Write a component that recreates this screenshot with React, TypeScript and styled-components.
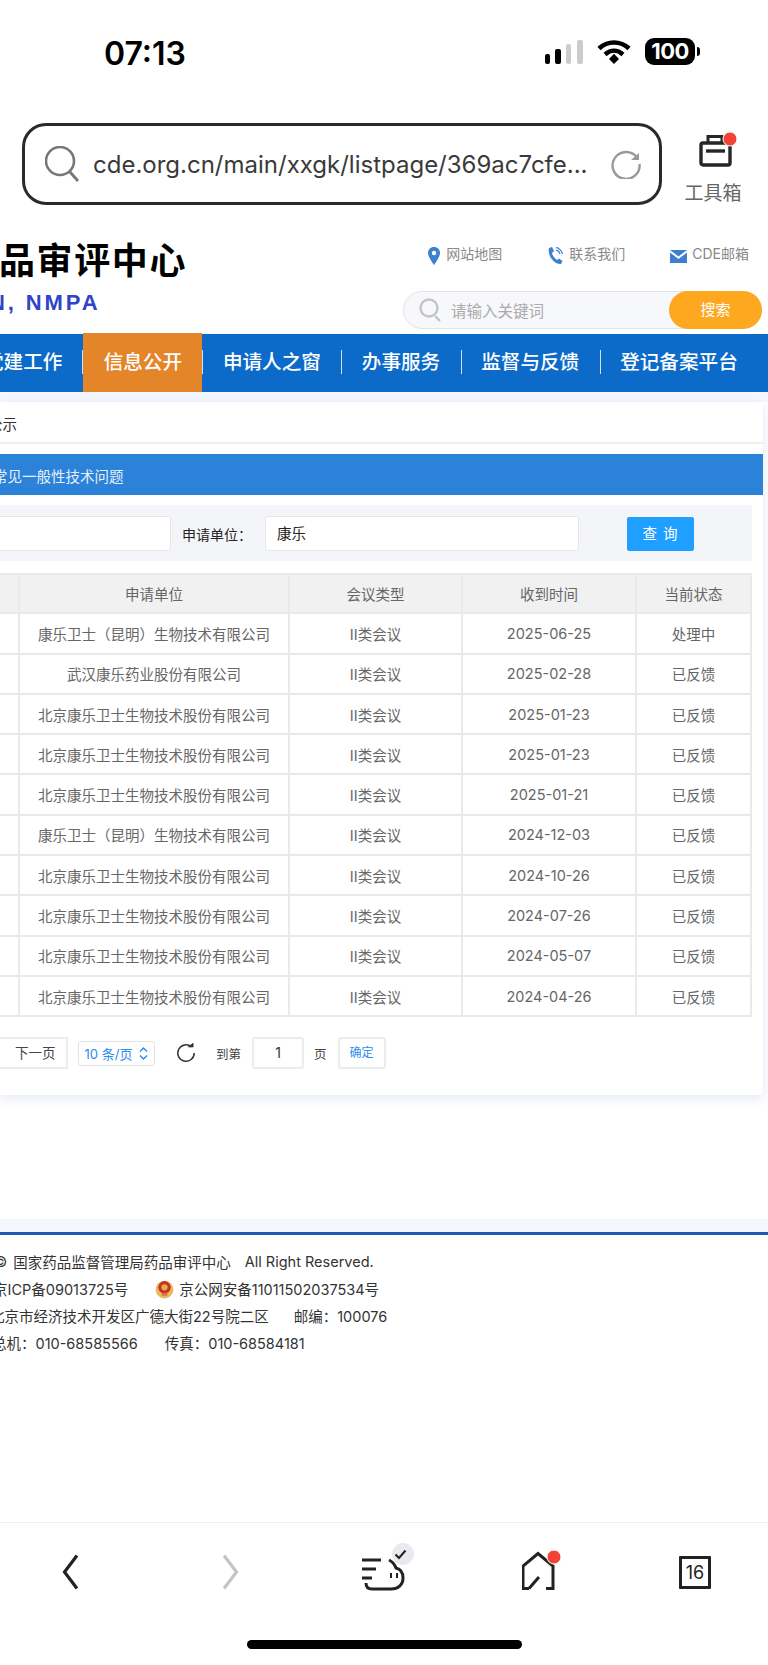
import styled, { createGlobalStyle } from "styled-components";

const GlobalStyle = createGlobalStyle`
  html, body {
    margin: 0;
    padding: 0;
    background: #fff;
  }
  body {
    font-family: "Inter", "Noto Sans CJK SC", sans-serif;
    color: #222;
  }
`;

const rows = [
  ["康乐卫士（昆明）生物技术有限公司", "2025-06-25", "处理中"],
  ["武汉康乐药业股份有限公司", "2025-02-28", "已反馈"],
  ["北京康乐卫士生物技术股份有限公司", "2025-01-23", "已反馈"],
  ["北京康乐卫士生物技术股份有限公司", "2025-01-23", "已反馈"],
  ["北京康乐卫士生物技术股份有限公司", "2025-01-21", "已反馈"],
  ["康乐卫士（昆明）生物技术有限公司", "2024-12-03", "已反馈"],
  ["北京康乐卫士生物技术股份有限公司", "2024-10-26", "已反馈"],
  ["北京康乐卫士生物技术股份有限公司", "2024-07-26", "已反馈"],
  ["北京康乐卫士生物技术股份有限公司", "2024-05-07", "已反馈"],
  ["北京康乐卫士生物技术股份有限公司", "2024-04-26", "已反馈"],
];

const navItems = ["申请人之窗", "办事服务", "监督与反馈", "登记备案平台"];

const App = () => {
  return (
    <Page>
      <GlobalStyle />
      <StatusBar>
        <Clock>07:13</Clock>
        <StatusIcons>
          <svg width="38" height="24" viewBox="0 0 38 24">
            <rect x="0" y="14" width="5" height="10" rx="2" fill="#000" />
            <rect x="10" y="9" width="6" height="15" rx="2" fill="#000" />
            <rect x="21" y="4" width="5" height="20" rx="2" fill="#ccc" />
            <rect x="32" y="0" width="6" height="24" rx="2" fill="#ccc" />
          </svg>
          <svg width="34" height="24" viewBox="0 0 34 24">
            <path d="M2 8.5C10.5 0.5 23.5 0.5 32 8.5" fill="none" stroke="#000" strokeWidth="4.6" />
            <path d="M8 14.5C13.5 9.5 20.5 9.5 26 14.5" fill="none" stroke="#000" strokeWidth="4.4" />
            <path d="M12 19L17 13.8L22 19L17 24Z" fill="#000" />
          </svg>
          <Battery>
            <BatteryBody>100</BatteryBody>
            <BatteryNub />
          </Battery>
        </StatusIcons>
      </StatusBar>

      <UrlRow>
        <UrlBar>
          <svg width="34" height="36" viewBox="0 0 34 36">
            <ellipse cx="15" cy="15" rx="14" ry="14" fill="none" stroke="#777" strokeWidth="2.6" />
            <path d="M25 26L33 35" stroke="#777" strokeWidth="2.8" />
          </svg>
          <UrlText>cde.org.cn/main/xxgk/listpage/369ac7cfe...</UrlText>
          <svg width="30" height="30" viewBox="0 0 30 30">
            <path d="M26 8.5A13.5 13.5 0 1 0 28.5 15" fill="none" stroke="#999" strokeWidth="2.4" />
            <path d="M20 11L28 11L28 4" fill="#999" stroke="none" />
          </svg>
        </UrlBar>
        <ToolBox>
          <ToolIcon>
            <svg width="40" height="40" viewBox="0 0 40 40">
              <path d="M10 11V4.5H24V11" fill="none" stroke="#262626" strokeWidth="3" />
              <rect x="3" y="11" width="29" height="22" rx="2" fill="none" stroke="#262626" strokeWidth="3.4" />
              <path d="M8 19H27" stroke="#262626" strokeWidth="3.4" />
              <circle cx="32" cy="7" r="7" fill="#f44336" stroke="#fff" strokeWidth="1" />
            </svg>
          </ToolIcon>
          <ToolLabel>工具箱</ToolLabel>
        </ToolBox>
      </UrlRow>

      <SiteHeader>
        <Brand>
          <BrandTitle>品审评中心</BrandTitle>
          <BrandSub>N, NMPA</BrandSub>
        </Brand>
        <HeaderTools>
          <TopLinks>
            <TopLink>
              <svg width="12" height="18" viewBox="0 0 12 18">
                <path d="M6 0C2.5 0 0 2.6 0 6C0 10 6 18 6 18C6 18 12 10 12 6C12 2.6 9.5 0 6 0Z" fill="#3f7fd0" />
                <circle cx="6" cy="6" r="2.2" fill="#fff" />
              </svg>
              <TopLinkText>网站地图</TopLinkText>
            </TopLink>
            <TopLink>
              <svg width="16" height="18" viewBox="0 0 16 18">
                <path d="M2 1L5 0L7 4L5 6C5.5 8.5 7.5 11.5 10 13L12 11.5L15.5 14L14 17C8 18 0 9 2 1Z" fill="#3f7fd0" />
                <path d="M9 3C11 3.5 12.5 5 13 7M9 0.5C12 1 15 4 15.5 7" fill="none" stroke="#3f7fd0" strokeWidth="1.2" />
              </svg>
              <TopLinkText>联系我们</TopLinkText>
            </TopLink>
            <TopLink $tight>
              <svg width="17" height="13" viewBox="0 0 17 13">
                <path d="M0 0H17L8.5 6.5Z" fill="#3f7fd0" />
                <path d="M0 2.5L8.5 9L17 2.5V13H0Z" fill="#3f7fd0" />
              </svg>
              <TopLinkText>CDE邮箱</TopLinkText>
            </TopLink>
          </TopLinks>
          <SearchBox>
            <svg width="22" height="24" viewBox="0 0 22 24">
              <circle cx="10" cy="10" r="8.5" fill="none" stroke="#c4c4c4" strokeWidth="2.4" />
              <path d="M16 18L21 23" stroke="#c4c4c4" strokeWidth="2.4" />
            </svg>
            <SearchHint>请输入关键词</SearchHint>
            <SearchButton>搜索</SearchButton>
          </SearchBox>
        </HeaderTools>
      </SiteHeader>

      <Nav>
        <NavItem $clipped>党建工作</NavItem>
        <NavActive>信息公开</NavActive>
        {navItems.map((item, index) => (
          <NavItem key={item} $divider={index > 0}>
            {item}
          </NavItem>
        ))}
      </Nav>

      <Main>
        <Card>
          <Crumb>
            <CrumbText>公示</CrumbText>
          </Crumb>
          <Banner>
            <BannerText>常见一般性技术问题</BannerText>
          </Banner>
          <FilterPanel>
            <FilterInput $width={182} $offscreen />
            <FilterLabel>申请单位：</FilterLabel>
            <FilterInput $width={314}>康乐</FilterInput>
            <QueryButton>查 询</QueryButton>
          </FilterPanel>
          <DataTable>
            <colgroup>
              <col style={{ width: 120 }} />
              <col style={{ width: 270 }} />
              <col style={{ width: 173 }} />
              <col style={{ width: 174 }} />
              <col style={{ width: 115 }} />
            </colgroup>
            <thead>
              <tr>
                <th></th>
                <th>申请单位</th>
                <th>会议类型</th>
                <th>收到时间</th>
                <th>当前状态</th>
              </tr>
            </thead>
            <tbody>
              {rows.map((row, index) => (
                <tr key={index}>
                  <td></td>
                  <td>{row[0]}</td>
                  <td>II类会议</td>
                  <td>{row[1]}</td>
                  <td>{row[2]}</td>
                </tr>
              ))}
            </tbody>
          </DataTable>
          <Pager>
            <PagerNext>下一页</PagerNext>
            <PageSize>
              10 条/页
              <svg width="9" height="15" viewBox="0 0 9 15">
                <path d="M1 5.5L4.5 2L8 5.5M1 9.5L4.5 13L8 9.5" fill="none" stroke="#2d8cf0" strokeWidth="1.5" />
              </svg>
            </PageSize>
            <RefreshIcon>
              <svg width="20" height="20" viewBox="0 0 20 20">
                <path d="M15.5 4A8.2 8.2 0 1 0 18.2 10" fill="none" stroke="#333" strokeWidth="1.5" />
                <path d="M11.5 4.2H17.5V-0.5Z" fill="#333" />
              </svg>
            </RefreshIcon>
            <PagerText>到第</PagerText>
            <PageInput>1</PageInput>
            <PagerText>页</PagerText>
            <ConfirmButton>确定</ConfirmButton>
          </Pager>
        </Card>
      </Main>

      <FooterBand />
      <Footer>
        <FooterLine>
          <FooterCopy>©</FooterCopy>
          <span>国家药品监督管理局药品审评中心</span>
          <FooterGap $width={14} />
          <span>All Right Reserved.</span>
        </FooterLine>
        <FooterLine $cut={-7}>
          <span>京ICP备09013725号</span>
          <FooterGap $width={27} />
          <svg width="19" height="20" viewBox="0 0 17 18">
            <circle cx="8.5" cy="9.5" r="8" fill="#e9b95c" />
            <circle cx="8.5" cy="7.5" r="5.6" fill="#c8322a" />
            <circle cx="8.5" cy="7.5" r="2.8" fill="#e5b23f" />
            <rect x="6" y="12.5" width="5" height="2.5" fill="#d2762f" />
          </svg>
          <FooterGap $width={5} />
          <span>京公网安备11011502037534号</span>
        </FooterLine>
        <FooterLine $cut={-10}>
          <span>北京市经济技术开发区广德大街22号院二区</span>
          <FooterGap $width={25} />
          <span>邮编：100076</span>
        </FooterLine>
        <FooterLine $cut={-8}>
          <span>总机：010-68585566</span>
          <FooterGap $width={27} />
          <span>传真：010-68584181</span>
        </FooterLine>
      </Footer>

      <Toolbar>
        <ToolbarIcons>
          <svg width="44" height="44" viewBox="0 0 44 44">
            <path d="M28 5.5L15.5 22L28 38.5" fill="none" stroke="#222" strokeWidth="3.2" />
          </svg>
          <svg width="44" height="44" viewBox="0 0 44 44">
            <path d="M17 5.5L29.5 22L17 38.5" fill="none" stroke="#c4c4c4" strokeWidth="3.2" />
          </svg>
          <PigIcon>
            <svg width="50" height="44" viewBox="0 0 50 44">
              <path d="M3 10H22M3 19H17M3 28H13" fill="none" stroke="#222" strokeWidth="3" />
              <path
                d="M7 33C7 37 9 39 13 39H32C39 39 44 35 44 28C44 22 41 19 37 18C36 15 34 12 30 10"
                fill="none"
                stroke="#222"
                strokeWidth="3"
              />
              <path d="M32 23V28M38 23V28" fill="none" stroke="#222" strokeWidth="2" />
            </svg>
            <PigBadge>
              <svg width="13" height="11" viewBox="0 0 13 11">
                <path d="M1.5 5.5L5 9L11.5 1.5" fill="none" stroke="#222" strokeWidth="2" />
              </svg>
            </PigBadge>
          </PigIcon>
          <svg width="44" height="44" viewBox="0 0 44 44">
            <path d="M7 38.5H1V16L16 3.5L31 16V38.5H24" fill="none" stroke="#222" strokeWidth="3" />
            <path d="M7 38.5L17 27" fill="none" stroke="#222" strokeWidth="3" />
            <circle cx="32" cy="7" r="7" fill="#f44336" stroke="#fff" strokeWidth="1" />
          </svg>
          <TabCount>16</TabCount>
        </ToolbarIcons>
        <HomeIndicator />
      </Toolbar>
    </Page>
  );
};

export default App;

const Page = styled.div`
  width: 768px;
  height: 1665px;
  display: flex;
  flex-direction: column;
  overflow: hidden;
  background: #fff;
`;

const StatusBar = styled.div`
  height: 123px;
  flex: none;
  display: flex;
  justify-content: space-between;
  align-items: flex-start;
  padding: 36px 68px 0 104px;
  box-sizing: border-box;
`;

const Clock = styled.div`
  font-size: 32px;
  font-weight: 600;
  line-height: 36px;
  color: #000;
`;

const StatusIcons = styled.div`
  display: flex;
  align-items: center;
  gap: 14px;
  margin-top: 2px;
`;

const Battery = styled.div`
  display: flex;
  align-items: center;
  gap: 2px;
`;

const BatteryBody = styled.div`
  width: 50px;
  height: 27px;
  border-radius: 9px;
  background: #000;
  color: #fff;
  font-size: 22px;
  font-weight: 700;
  line-height: 27px;
  text-align: center;
  letter-spacing: -0.5px;
`;

const BatteryNub = styled.div`
  width: 3px;
  height: 9px;
  background: #000;
  border-radius: 0 3px 3px 0;
`;

const UrlRow = styled.div`
  height: 99px;
  flex: none;
  display: flex;
  align-items: flex-start;
  padding-left: 22px;
  box-sizing: border-box;
`;

const UrlBar = styled.div`
  width: 640px;
  height: 82px;
  flex: none;
  box-sizing: border-box;
  border: 3px solid #2a2a2a;
  border-radius: 24px;
  display: flex;
  align-items: center;
  padding: 0 18px 0 20px;
`;

const UrlText = styled.div`
  flex: 1;
  margin-left: 14px;
  font-size: 24px;
  color: #3a3a3a;
  white-space: nowrap;
`;

const ToolBox = styled.div`
  margin: 9px 0 0 21px;
  width: 60px;
  display: flex;
  flex-direction: column;
  align-items: center;
`;

const ToolIcon = styled.div`
  height: 40px;
  padding-left: 9px;
`;

const ToolLabel = styled.div`
  margin-top: 10px;
  font-size: 19px;
  line-height: 24px;
  color: #666;
  white-space: nowrap;
`;

const SiteHeader = styled.div`
  height: 112px;
  flex: none;
  display: flex;
  justify-content: space-between;
  box-sizing: border-box;
`;

const Brand = styled.div`
  display: flex;
  flex-direction: column;
  margin-left: -1px;
  padding-top: 17px;
`;

const BrandTitle = styled.div`
  font-size: 36px;
  font-weight: 700;
  line-height: 44px;
  letter-spacing: 1.6px;
  color: #000;
  white-space: nowrap;
`;

const BrandSub = styled.div`
  margin-top: 7px;
  margin-left: -10px;
  font-family: "Liberation Sans", sans-serif;
  font-size: 22px;
  font-weight: 700;
  line-height: 26px;
  letter-spacing: 2.9px;
  color: #2f44c8;
  white-space: nowrap;
`;

const HeaderTools = styled.div`
  width: 359px;
  margin-right: 6px;
  display: flex;
  flex-direction: column;
  align-items: flex-end;
  padding-top: 22px;
`;

const TopLinks = styled.div`
  display: flex;
  gap: 45px;
  height: 24px;
  margin-right: 13px;
  align-items: center;
`;

const TopLink = styled.div<{ $tight?: boolean }>`
  display: flex;
  align-items: center;
  gap: ${(props) => (props.$tight ? "5px" : "6px")};
  white-space: nowrap;
`;

const TopLinkText = styled.span`
  font-size: 14px;
  line-height: 20px;
  color: #8a8a8a;
  margin-top: -4px;
`;

const SearchBox = styled.div`
  margin-top: 23px;
  width: 100%;
  height: 38px;
  box-sizing: border-box;
  display: flex;
  align-items: center;
  padding-left: 15px;
  background: #f7f8fb;
  border: 1px solid #e3e3e6;
  border-radius: 19px;
`;

const SearchHint = styled.div`
  flex: 1;
  margin-left: 10px;
  font-size: 15.5px;
  color: #aaa;
`;

const SearchButton = styled.div`
  width: 93px;
  height: 38px;
  margin-right: -1px;
  border-radius: 19px;
  background: #fda81f;
  color: #fff;
  font-size: 15px;
  line-height: 38px;
  text-align: center;
`;

const Nav = styled.div`
  height: 58px;
  flex: none;
  display: flex;
  align-items: stretch;
  background: #0c6bc9;
`;

const NavItem = styled.div<{ $divider?: boolean; $clipped?: boolean }>`
  position: relative;
  font-size: 19.6px;
  font-weight: 500;
  line-height: 56px;
  color: #fff;
  white-space: nowrap;
  padding: 0 20.5px;
  margin-left: ${(props) => (props.$clipped ? "-16px" : "0")};
  padding-left: ${(props) => (props.$clipped ? "0" : "20.5px")};
  padding-right: ${(props) => (props.$clipped ? "21px" : "20.5px")};

  &::before {
    content: "";
    display: ${(props) => (props.$divider ? "block" : "none")};
    position: absolute;
    left: 0;
    top: 16px;
    height: 24px;
    width: 1px;
    background: #cfe2f6;
  }
`;

const NavActive = styled.div`
  position: relative;
  width: 119px;
  margin-top: -1px;
  height: 59px;
  flex: none;
  background: #e5852a;
  color: #fff;
  font-size: 19.6px;
  font-weight: 500;
  line-height: 58px;
  text-align: center;

  &::before,
  &::after {
    content: "";
    position: absolute;
    top: 17px;
    height: 24px;
    width: 1px;
    background: #cfe2f6;
  }
  &::before {
    left: -1px;
  }
  &::after {
    right: -1px;
  }
`;

const Main = styled.div`
  padding: 10px 5px 0 0;
  background: linear-gradient(#f4f8fe 10px, #fff 10px);
  flex: none;
  height: 827px;
  box-sizing: border-box;
`;

const Card = styled.div`
  height: 693px;
  background: #fff;
  border-radius: 0 0 4px 0;
  box-shadow: 0 3px 12px rgba(90, 120, 190, 0.18);
  overflow: hidden;
`;

const Crumb = styled.div`
  height: 42px;
  box-sizing: border-box;
  padding-top: 2px;
  border-bottom: 2px solid #eeeeee;
  display: flex;
  align-items: center;
`;

const CrumbText = styled.div`
  margin-left: -12px;
  font-size: 14.5px;
  color: #333;
`;

const Banner = styled.div`
  margin-top: 10px;
  height: 41px;
  box-sizing: border-box;
  padding-top: 2px;
  background: #2b82d9;
  display: flex;
  align-items: center;
`;

const BannerText = styled.div`
  margin-left: -7px;
  font-size: 14.5px;
  color: #e6f0fc;
  white-space: nowrap;
`;

const FilterPanel = styled.div`
  margin-top: 10px;
  width: 752px;
  height: 56px;
  box-sizing: border-box;
  padding-top: 1px;
  background: #f4f5f9;
  display: flex;
  align-items: center;
`;

const FilterInput = styled.div<{ $width: number; $offscreen?: boolean }>`
  width: ${(props) => props.$width}px;
  height: 35px;
  flex: none;
  margin-left: ${(props) => (props.$offscreen ? "-11px" : "0")};
  box-sizing: border-box;
  background: #fff;
  border: 1px solid #e6e6e6;
  border-radius: 3px;
  padding-left: 11px;
  font-size: 14.5px;
  line-height: 33px;
  color: #222;
`;

const FilterLabel = styled.div`
  width: 83px;
  flex: none;
  margin-left: 11px;
  font-size: 14px;
  color: #222;
  white-space: nowrap;
`;

const QueryButton = styled.div`
  width: 67px;
  height: 34px;
  flex: none;
  margin-left: 48px;
  border-radius: 2px;
  background: #1f9fff;
  color: #fff;
  font-size: 14.5px;
  line-height: 34px;
  text-align: center;
  letter-spacing: 1px;
`;

const DataTable = styled.table`
  margin: 12px 0 0 -102px;
  width: 852px;
  table-layout: fixed;
  border-collapse: collapse;
  font-size: 14.5px;
  color: #666;

  th,
  td {
    height: 40.3px;
    padding: 0;
    border: 2px solid #e9e9e9;
    text-align: center;
    font-weight: 400;
    box-sizing: border-box;
  }

  th {
    height: 39.3px;
    background: #f1f1f1;
  }
`;

const Pager = styled.div`
  margin-top: 20px;
  height: 32px;
  display: flex;
  align-items: center;
  font-size: 13px;
`;

const PagerNext = styled.div`
  width: 78px;
  height: 32px;
  flex: none;
  margin-left: -10px;
  box-sizing: border-box;
  border: 2px solid #ececec;
  padding-left: 23px;
  font-size: 13.5px;
  line-height: 28px;
  color: #444;
  white-space: nowrap;
`;

const PageSize = styled.div`
  width: 77px;
  height: 25px;
  flex: none;
  margin-left: 10px;
  box-sizing: border-box;
  border: 1px solid #e3e3e3;
  border-radius: 3px;
  display: flex;
  align-items: center;
  justify-content: center;
  gap: 7px;
  color: #2d8cf0;
`;

const RefreshIcon = styled.div`
  margin-left: 21px;
  width: 20px;
  height: 20px;
  flex: none;
`;

const PagerText = styled.div`
  margin: 0 11px 0 20px;
  font-size: 12.5px;
  color: #444;
  white-space: nowrap;

  & + div + & {
    margin: 0 11px 0 10px;
  }
`;

const PageInput = styled.div`
  width: 52px;
  height: 32px;
  flex: none;
  box-sizing: border-box;
  border: 2px solid #ececec;
  border-radius: 3px;
  line-height: 28px;
  text-align: center;
  font-size: 14px;
  color: #333;
`;

const ConfirmButton = styled.div`
  width: 48px;
  height: 32px;
  flex: none;
  box-sizing: border-box;
  border: 2px solid #ececec;
  border-radius: 3px;
  line-height: 28px;
  text-align: center;
  font-size: 12px;
  color: #2d8cf0;
`;

const FooterBand = styled.div`
  height: 13px;
  flex: none;
  background: #f4f7fd;
  border-bottom: 3px solid #1e5bb0;
`;

const Footer = styled.div`
  flex: 1;
  padding-top: 13px;
  box-sizing: border-box;
`;

const FooterLine = styled.div<{ $cut?: number }>`
  height: 27px;
  display: flex;
  align-items: center;
  margin-left: ${(props) => props.$cut ?? 0}px;
  font-size: 14.5px;
  color: #333;
  white-space: nowrap;
`;

const FooterCopy = styled.span`
  margin: 0 6px 0 -6px;
`;

const FooterGap = styled.span<{ $width: number }>`
  width: ${(props) => props.$width}px;
  flex: none;
`;

const Toolbar = styled.div`
  height: 143px;
  flex: none;
  box-sizing: border-box;
  border-top: 1px solid #f0f0f0;
  padding-top: 27px;
  display: flex;
  flex-direction: column;
`;

const ToolbarIcons = styled.div`
  display: flex;
  justify-content: space-between;
  align-items: center;
  padding: 0 51px 0 49px;
  height: 44px;
`;

const PigIcon = styled.div`
  position: relative;
  width: 44px;
  height: 44px;

  svg:first-child {
    margin-left: -5px;
  }
`;

const PigBadge = styled.div`
  position: absolute;
  right: -6px;
  top: -7px;
  width: 22px;
  height: 22px;
  border-radius: 50%;
  background: #e9eaf0;
  display: flex;
  align-items: center;
  justify-content: center;
`;

const TabCount = styled.div`
  width: 32px;
  height: 33px;
  margin-right: 6px;
  box-sizing: border-box;
  border: 3px solid #222;
  border-radius: 1px;
  font-size: 18px;
  line-height: 27px;
  text-align: center;
  color: #222;
`;

const HomeIndicator = styled.div`
  width: 275px;
  height: 9px;
  margin: 46px auto 0;
  border-radius: 5px;
  background: #000;
`;
